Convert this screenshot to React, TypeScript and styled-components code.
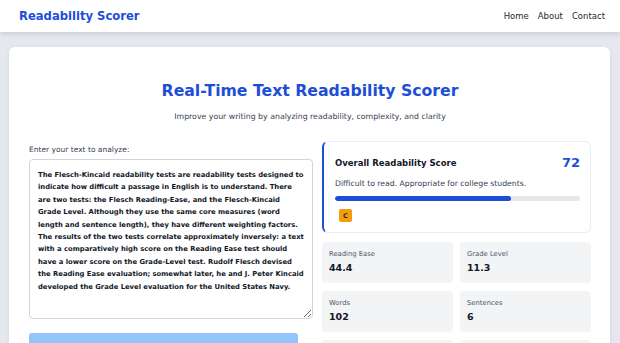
import styled, { createGlobalStyle } from "styled-components";

const GlobalStyle = createGlobalStyle`
  html, body {
    margin: 0;
    padding: 0;
    background: #e5e8ef;
    font-family: "DejaVu Sans", Verdana, sans-serif;
    color: #111827;
  }
  * {
    box-sizing: border-box;
    font-family: "DejaVu Sans", Verdana, sans-serif;
  }
`;

const Header = styled.header`
  height: 32px;
  background: #ffffff;
  box-shadow: 0 2px 5px rgba(0, 0, 0, 0.12);
  display: flex;
  align-items: center;
  justify-content: space-between;
  padding: 0 15px 0 19px;
`;

const Logo = styled.div`
  font-size: 11.6px;
  font-weight: 700;
  color: #1d4ed8;
`;

const Nav = styled.nav`
  display: flex;
  gap: 9px;
`;

const NavLink = styled.a`
  font-size: 8.5px;
  color: #1f2937;
  text-decoration: none;
`;

const Main = styled.main`
  padding: 15px 10px 0 9px;
`;

const Card = styled.div`
  background: #ffffff;
  border-radius: 6px;
  box-shadow: 0 1px 4px rgba(0, 0, 0, 0.08);
  padding: 34px 19px 20px 20px;
  min-height: 320px;
`;

const Title = styled.h1`
  margin: 0;
  text-align: center;
  font-size: 15.7px;
  font-weight: 700;
  color: #1d4ed8;
`;

const Subtitle = styled.p`
  margin: 12px 0 0;
  text-align: center;
  font-size: 7.8px;
  color: #374151;
`;

const Columns = styled.div`
  display: grid;
  grid-template-columns: 284px 269px;
  gap: 9px;
  margin-top: 20px;
`;

const InputColumn = styled.div`
  display: flex;
  flex-direction: column;
  padding-top: 4px;
`;

const Label = styled.label`
  font-size: 7.5px;
  color: #374151;
  margin-bottom: 5px;
`;

const TextArea = styled.textarea`
  height: 160px;
  width: 100%;
  resize: vertical;
  border: 1px solid #d1d5db;
  border-radius: 4px;
  padding: 9px 7px 9px 8px;
  font-size: 6.8px;
  line-height: 12.4px;
  font-weight: 700;
  color: #111827;
  outline: none;
`;

const AnalyzeButton = styled.button`
  margin-top: 14px;
  width: 269px;
  height: 40px;
  border: none;
  border-radius: 3px;
  background: #93c5fd;
  color: #ffffff;
  font-size: 9px;
  font-weight: 700;
`;

const ResultsColumn = styled.div`
  display: flex;
  flex-direction: column;
  gap: 9px;
`;

const ScoreCard = styled.div`
  border: 1px solid #e5edfb;
  border-left: 2px solid #1d4ed8;
  border-radius: 6px;
  padding: 13px 10px 10px 11px;
`;

const ScoreHead = styled.div`
  display: flex;
  justify-content: space-between;
  align-items: center;
`;

const ScoreTitle = styled.div`
  font-size: 8.5px;
  font-weight: 700;
  color: #111827;
`;

const ScoreValue = styled.div`
  font-size: 13px;
  font-weight: 700;
  color: #1d4ed8;
`;

const ScoreText = styled.div`
  margin-top: 9px;
  font-size: 7.7px;
  color: #374151;
`;

const Track = styled.div`
  margin-top: 8px;
  height: 5px;
  border-radius: 3px;
  background: #e5e7eb;
  overflow: hidden;
`;

const Fill = styled.div`
  height: 100%;
  background: #1d4ed8;
  border-radius: 3px;
`;

const Grade = styled.span`
  display: inline-flex;
  align-items: center;
  justify-content: center;
  margin: 8px 0 0 4px;
  width: 13px;
  height: 13px;
  border-radius: 2px;
  background: #f59e0b;
  font-size: 6.5px;
  font-weight: 700;
  color: #1f2937;
`;

const StatGrid = styled.div`
  display: grid;
  grid-template-columns: 1fr 1fr;
  gap: 8px 7px;
`;

const Stat = styled.div`
  background: #f3f4f6;
  border-radius: 4px;
  height: 41px;
  padding: 8px 7px;
`;

const StatLabel = styled.div`
  font-size: 6.8px;
  color: #4b5563;
`;

const StatValue = styled.div`
  margin-top: 4px;
  font-size: 9.5px;
  font-weight: 700;
  color: #111827;
`;

const sample =
  "The Flesch-Kincaid readability tests are readability tests designed to indicate how difficult a passage in English is to understand. There are two tests: the Flesch Reading-Ease, and the Flesch-Kincaid Grade Level. Although they use the same core measures (word length and sentence length), they have different weighting factors. The results of the two tests correlate approximately inversely: a text with a comparatively high score on the Reading Ease test should have a lower score on the Grade-Level test. Rudolf Flesch devised the Reading Ease evaluation; somewhat later, he and J. Peter Kincaid developed the Grade Level evaluation for the United States Navy.";

const stats = [
  { label: "Reading Ease", value: "44.4" },
  { label: "Grade Level", value: "11.3" },
  { label: "Words", value: "102" },
  { label: "Sentences", value: "6" },
  { label: "Syllables", value: "172" },
  { label: "Avg. Words/Sentence", value: "17.0" },
];

export default function App() {
  const score = 72;

  return (
    <>
      <GlobalStyle />
      <Header>
        <Logo>Readability Scorer</Logo>
        <Nav>
          <NavLink href="#">Home</NavLink>
          <NavLink href="#">About</NavLink>
          <NavLink href="#">Contact</NavLink>
        </Nav>
      </Header>

      <Main>
        <Card>
          <Title>Real-Time Text Readability Scorer</Title>
          <Subtitle>Improve your writing by analyzing readability, complexity, and clarity</Subtitle>

          <Columns>
            <InputColumn>
              <Label htmlFor="text">Enter your text to analyze:</Label>
              <TextArea id="text" defaultValue={sample} spellCheck={false} />
              <AnalyzeButton>Analyze Text</AnalyzeButton>
            </InputColumn>

            <ResultsColumn>
              <ScoreCard>
                <ScoreHead>
                  <ScoreTitle>Overall Readability Score</ScoreTitle>
                  <ScoreValue>{score}</ScoreValue>
                </ScoreHead>
                <ScoreText>Difficult to read. Appropriate for college students.</ScoreText>
                <Track>
                  <Fill style={{ width: `${score}%` }} />
                </Track>
                <Grade>C</Grade>
              </ScoreCard>

              <StatGrid>
                {stats.map((s) => (
                  <Stat key={s.label}>
                    <StatLabel>{s.label}</StatLabel>
                    <StatValue>{s.value}</StatValue>
                  </Stat>
                ))}
              </StatGrid>
            </ResultsColumn>
          </Columns>
        </Card>
      </Main>
    </>
  );
}
